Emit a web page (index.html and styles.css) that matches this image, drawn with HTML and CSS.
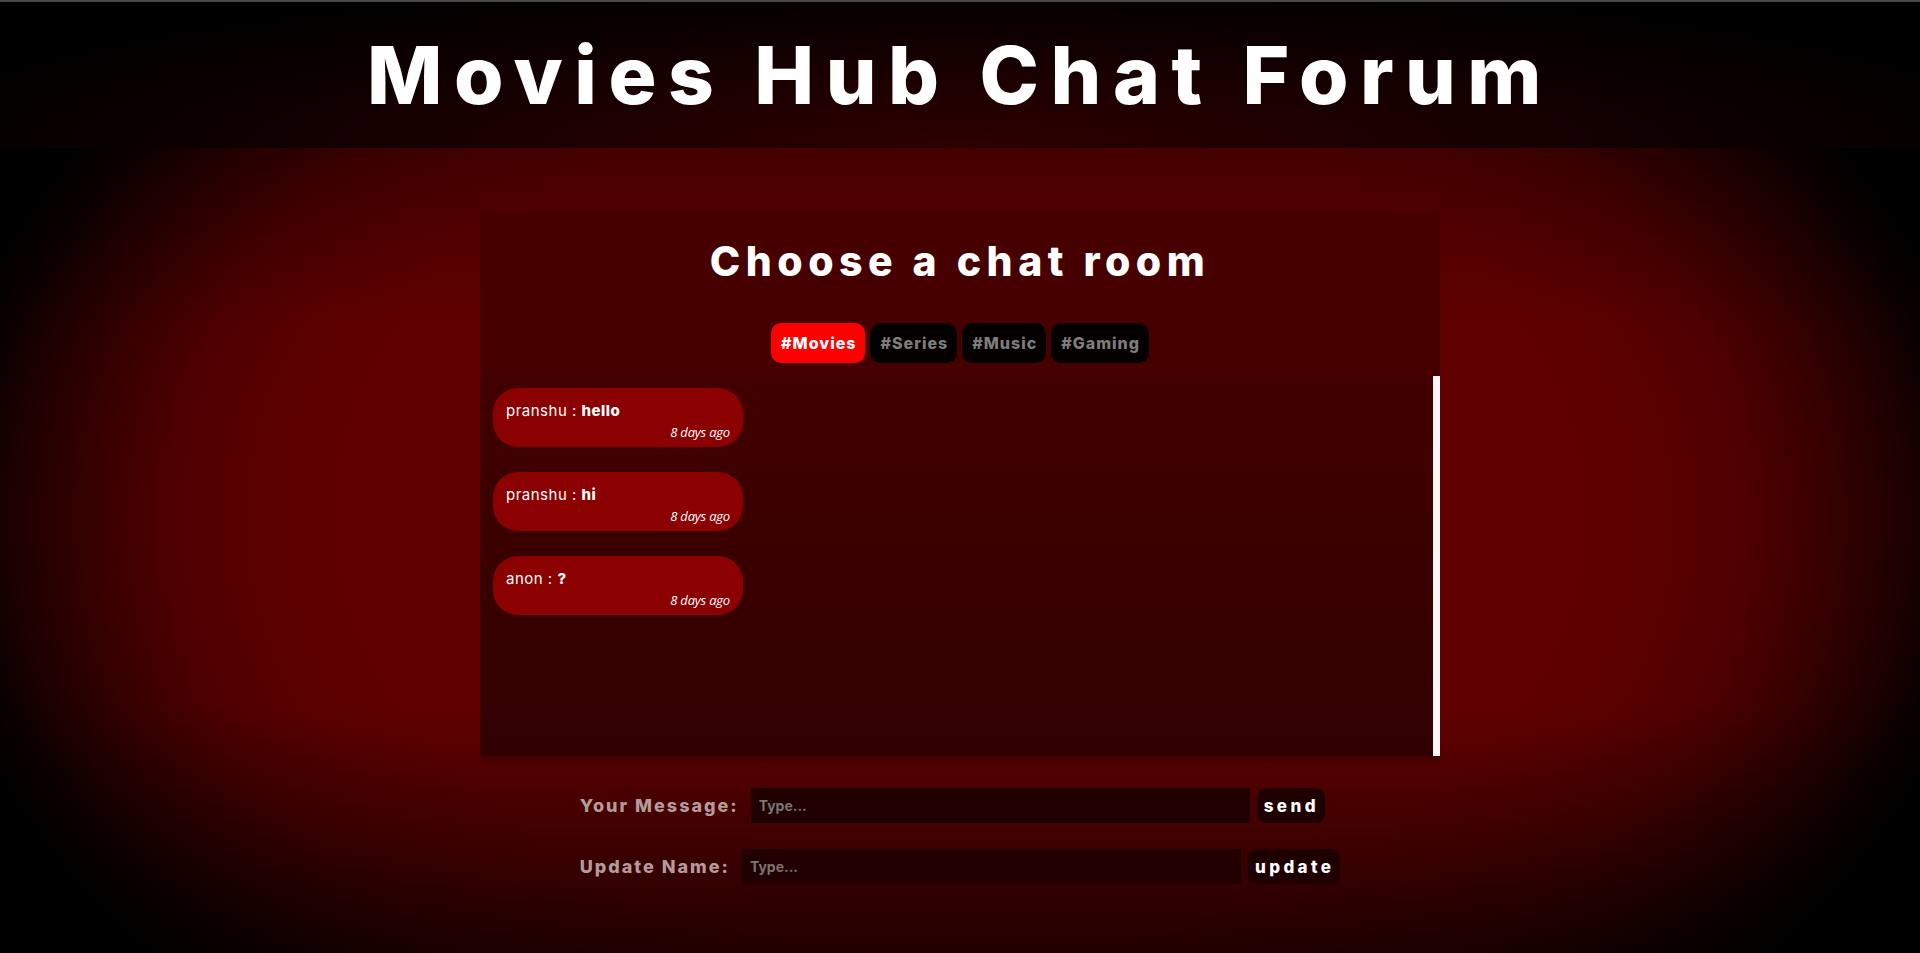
FILE: index.html
```html
<!DOCTYPE html>
<html lang="en">
<head>
<meta charset="utf-8">
<title>Movies Hub Chat Forum</title>
<link rel="stylesheet" href="styles.css">
</head>
<body>
<header class="site-header">
  <h1 class="site-title">Movies Hub Chat Forum</h1>
</header>
<main class="stage">
  <section class="chat-box">
    <div class="room-head">
      <h2 class="room-title">Choose a chat room</h2>
      <nav class="rooms">
        <button class="room active">#Movies</button>
        <button class="room">#Series</button>
        <button class="room">#Music</button>
        <button class="room">#Gaming</button>
      </nav>
    </div>
    <div class="messages">
      <div class="bubble">
        <p class="line">pranshu : <b>hello</b></p>
        <p class="time">8 days ago</p>
      </div>
      <div class="bubble">
        <p class="line">pranshu : <b>hi</b></p>
        <p class="time">8 days ago</p>
      </div>
      <div class="bubble">
        <p class="line">anon : <b>?</b></p>
        <p class="time">8 days ago</p>
      </div>
    </div>
  </section>
  <form class="composer">
    <div class="row">
      <label class="label">Your Message:</label>
      <input class="field" type="text" placeholder="Type...">
      <button class="action" type="button">send</button>
    </div>
    <div class="row">
      <label class="label">Update Name:</label>
      <input class="field" type="text" placeholder="Type...">
      <button class="action" type="button">update</button>
    </div>
  </form>
</main>
</body>
</html>
```
FILE: styles.css
```css
* { box-sizing: border-box; }
html, body { margin: 0; padding: 0; }
body {
  background: #000;
  font-family: "Inter", "DejaVu Sans", sans-serif;
  color: #fff;
  overflow: hidden;
}
.site-header {
  height: 148px;
  border-top: 2px solid #4a4a4a;
  background: radial-gradient(ellipse 1100px 170px at 50% 100%, #2e0000 0%, #120000 60%, #000 100%);
  text-align: center;
}
.site-title {
  margin: 0;
  padding-top: 24px;
  font-size: 80px;
  line-height: 97px;
  font-weight: 800;
  letter-spacing: 11.5px;
}
.stage {
  min-height: calc(100vh - 148px);
  padding-top: 64px;
  background:
    linear-gradient(rgba(0,0,0,0.28) 0, rgba(0,0,0,0) 180px, rgba(0,0,0,0) 560px, rgba(0,0,0,0.65) 805px),
    radial-gradient(ellipse 1030px 720px at 50% 370px,
      #600000 0%, #600000 60%, #5a0000 68%, #4d0000 77%, #350000 85%, #1c0000 92%, #0c0000 96%, #000 100%);
}
.chat-box {
  width: 960px;
  margin: 0 auto;
  background: #470000;
  padding-bottom: 7px;
}
.room-head {
  height: 164px;
  padding-top: 25px;
  text-align: center;
}
.room-title {
  margin: 0;
  font-size: 41px;
  line-height: 48px;
  font-weight: 800;
  letter-spacing: 5.5px;
}
.rooms {
  margin-top: 38px;
  display: flex;
  justify-content: center;
  gap: 5px;
}
.room {
  height: 40px;
  padding: 0 9px 0 10px;
  border: 0;
  border-radius: 10px;
  background: #050000;
  color: #7d7d7d;
  font-family: "Inter", sans-serif;
  font-size: 16px;
  font-weight: 800;
  letter-spacing: 1px;
}
.room.active { background: #ff0000; color: #fff; }
.messages {
  height: 380px;
  padding: 12px 13px;
  border-right: 7px solid #f8f6f6;
  background: linear-gradient(#420000, #300000);
  display: flex;
  flex-direction: column;
  gap: 25px;
}
.bubble {
  width: 250px;
  height: 59px;
  border-radius: 25px;
  background: #8b0000;
  padding: 14px 13px 0 13px;
}
.line {
  margin: 0;
  font-size: 15px;
  line-height: 18px;
  font-weight: 400;
  letter-spacing: 0.5px;
}
.line b { font-weight: 800; }
.time {
  margin: 4px 0 0;
  text-align: right;
  font-family: "Open Sans", sans-serif;
  font-style: italic;
  font-size: 13px;
  line-height: 16px;
  letter-spacing: -0.2px;
}
.composer {
  width: fit-content;
  margin: 0 auto;
  padding-top: 25px;
}
.row {
  display: flex;
  align-items: center;
  height: 35px;
  margin-bottom: 26px;
}
.label {
  color: #b39b9b;
  font-size: 18px;
  font-weight: 800;
  letter-spacing: 2px;
  margin-right: 12px;
}
.field {
  width: 499px;
  height: 35px;
  border: 0;
  outline: 0;
  background: #200000;
  color: #fff;
  padding: 0 8px;
  font-family: "Inter", sans-serif;
  font-size: 14px;
  font-weight: 700;
}
.field::placeholder { color: #7a7474; }
.action {
  margin-left: 7px;
  height: 35px;
  padding: 0 6px 0 7px;
  border: 0;
  border-radius: 9px;
  background: #1e0000;
  color: #fff;
  font-family: "Inter", sans-serif;
  font-size: 17px;
  font-weight: 800;
  letter-spacing: 3.4px;
}
```
